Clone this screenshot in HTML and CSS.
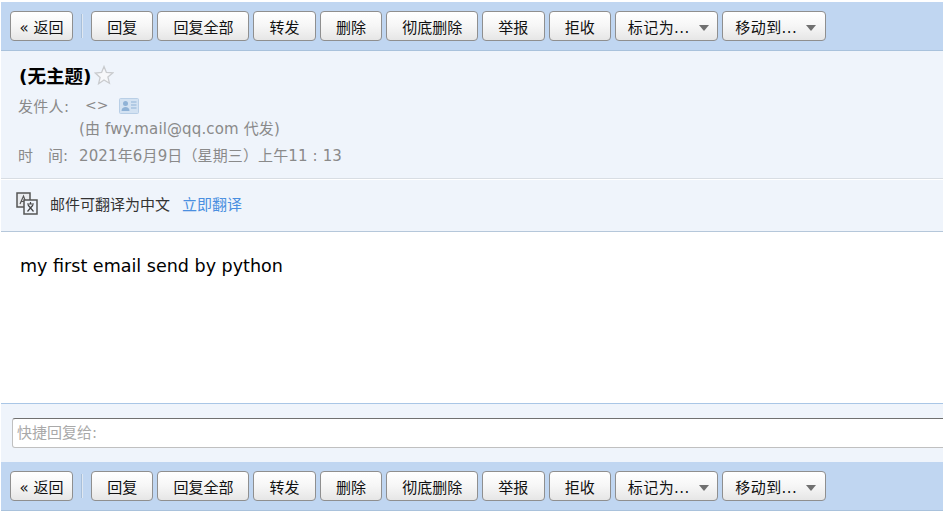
FILE: index.html
```html
<!DOCTYPE html>
<html lang="zh">
<head>
<meta charset="utf-8">
<title>(无主题)</title>
<link rel="stylesheet" href="styles.css">
</head>
<body>
<div class="toolbar">
  <button class="btn w-back"><span class="raquo">«</span> 返回</button>
  <span class="sep"></span>
  <button class="btn w-2">回复</button>
  <button class="btn w-4">回复全部</button>
  <button class="btn w-2">转发</button>
  <button class="btn w-2">删除</button>
  <button class="btn w-4">彻底删除</button>
  <button class="btn w-2">举报</button>
  <button class="btn w-2">拒收</button>
  <button class="btn w-menu">标记为...<span class="caret"></span></button>
  <button class="btn w-menu">移动到...<span class="caret"></span></button>
</div>
<header class="head">
  <h1 class="subject">(无主题)<svg class="star" width="20" height="20" viewBox="0 0 20 20"><path d="M10 1.500l2.400 5.900 6.300.5-4.800 4.100 1.500 6.200L10 15l-5.400 3.700 1.500-6.200L1.300 8l6.300-.6z" fill="#f7f8fa" stroke="#c9cbce" stroke-width="1.300"/></svg></h1>
  <div class="meta-row from"><span class="label">发件人:</span><span class="addr">&lt;&gt;</span><svg class="card" width="20" height="16" viewBox="0 0 20 16"><rect x=".5" y=".5" width="19" height="15" rx="1" fill="#d3e2f2" stroke="#b9cfe6"/><circle cx="6.500" cy="5.500" r="2.500" fill="#8fb2d6"/><path d="M2.500 13c0-3 2-4 4-4s4 1 4 4z" fill="#8fb2d6"/><path d="M12 4h5.500M12 7h5.500M12 10h5.500" stroke="#8fb2d6"/></svg></div>
  <div class="meta-row via">(由 fwy.mail@qq.com 代发)</div>
  <div class="meta-row time"><span class="label-time">时<i class="gap"></i>间:</span><span class="time-value">2021年6月9日（星期三）上午11 : 13</span></div>
</header>
<section class="translate">
  <svg class="tr-icon" width="22" height="23" viewBox="0 0 22 23"><path d="M1 1h13v14H1z" fill="#e9ebee" stroke="#555" stroke-width="1.500"/><path d="M4 12l3.500-8 3 8M5.200 9.500h4.500" fill="none" stroke="#555" stroke-width="1.200"/><path d="M8 8h13v14H8z" fill="#eff4fb" stroke="#555" stroke-width="1.500"/><path d="M11 12h7M14.500 10v2M12 13l5.500 6.500M17 13l-5.500 6.500" fill="none" stroke="#444" stroke-width="1.200"/></svg>
  <span class="tr-text">邮件可翻译为中文</span><a class="tr-link" href="#">立即翻译</a>
</section>
<main class="content">my first email send by python</main>
<section class="reply"><div class="reply-input">快捷回复给:</div></section>
<div class="toolbar">
  <button class="btn w-back"><span class="raquo">«</span> 返回</button>
  <span class="sep"></span>
  <button class="btn w-2">回复</button>
  <button class="btn w-4">回复全部</button>
  <button class="btn w-2">转发</button>
  <button class="btn w-2">删除</button>
  <button class="btn w-4">彻底删除</button>
  <button class="btn w-2">举报</button>
  <button class="btn w-2">拒收</button>
  <button class="btn w-menu">标记为...<span class="caret"></span></button>
  <button class="btn w-menu">移动到...<span class="caret"></span></button>
</div>
</body>
</html>
```
FILE: styles.css
```css
html, body { margin: 0; padding: 0; height: 512px; overflow: hidden; background: #fff; }
body {
  padding: 2px 0 0 1px;
  box-sizing: border-box;
  font-family: "DejaVu Sans", "Noto Sans CJK SC", sans-serif;
  font-size: 15px;
  color: #000;
}
.toolbar {
  display: flex;
  align-items: flex-start;
  gap: 4px;
  padding: 9px 0 0 9px;
  box-sizing: border-box;
  background: #c0d6f1;
  border-bottom: 1px solid #a9c2dc;
  height: 49px;
}
.btn {
  height: 30px;
  padding: 0;
  flex: none;
  border: 1px solid #8f8f8f;
  border-radius: 4px;
  background: linear-gradient(#ffffff 0%, #f6f6f6 50%, #e6e6e6 100%);
  font-family: inherit;
  font-size: 15px;
  color: #111;
  text-align: center;
  white-space: nowrap;
}
.w-back { width: 63px; }
.w-2 { width: 62.4px; }
.w-4 { width: 92px; }
.w-menu { width: 103.5px; padding-left: 3px; letter-spacing: 0.4px; }
.raquo { font-size: 15px; }
.sep { width: 1px; height: 24px; margin: 3px 4px 0 4px; background: #dfe7f0; border-left: 1px solid #a8bfd9; flex: none; }
.caret {
  display: inline-block;
  width: 0; height: 0;
  margin-left: 9px;
  border: 5px solid transparent;
  border-top: 6px solid #707070;
  border-bottom: 0;
  vertical-align: 2px;
}
.head {
  height: 128px;
  box-sizing: border-box;
  padding: 14px 0 0 17px;
  background: #eff4fb;
  border-bottom: 1px solid #d8dde3;
  color: #8a8a8a;
}
.subject {
  display: flex;
  align-items: center;
  margin: 0 0 0 1px;
  height: 20px;
  font-size: 18.5px;
  font-weight: 700;
  color: #000;
}
.star { margin-left: 3px; }
.meta-row { display: flex; align-items: center; font-size: 15px; }
.from { margin-top: 10px; height: 20px; }
.label { width: 67px; letter-spacing: 0.3px; }
.addr { width: 34px; font-size: 14px; }
.card { margin-top: 2px; }
.via { margin: 2px 0 0 61px; height: 20px; letter-spacing: 0.13px; }
.time { margin-top: 7px; height: 20px; }
.label-time { width: 61px; }
.time-value { letter-spacing: 0.13px; }
.gap { display: inline-block; width: 15px; }
.translate {
  height: 52px;
  box-sizing: border-box;
  display: flex;
  align-items: center;
  padding: 0 0 5px 15px;
  margin-top: 1px;
  background: #eff4fb;
  border-bottom: 1px solid #b5c7da;
  color: #333;
  font-size: 15px;
}
.tr-text { margin-left: 12px; }
.tr-link { margin-left: 12px; color: #4a8fe0; text-decoration: none; }
.content {
  height: 171px;
  box-sizing: border-box;
  padding: 23px 0 0 19px;
  font-size: 17.55px;
  line-height: 22px;
  color: #000;
}
.reply {
  height: 59px;
  box-sizing: border-box;
  padding: 14px 0 0 11px;
  background: #eff4fb;
  border-top: 1px solid #a9c6e6;
  overflow: hidden;
}
.reply-input {
  width: 1000px;
  height: 30px;
  box-sizing: border-box;
  padding-left: 4px;
  background: #fff;
  border: 1px solid #c0c0c0;
  border-top-color: #707070;
  border-radius: 3px;
  color: #a9a9a9;
  font-size: 15px;
  line-height: 29px;
}
```
